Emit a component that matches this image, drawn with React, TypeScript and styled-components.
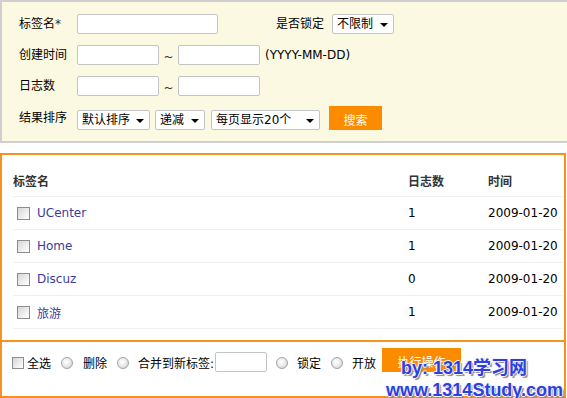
import React from "react";
import styled, { createGlobalStyle } from "styled-components";

const GlobalStyle = createGlobalStyle`
  html, body { margin: 0; padding: 0; background: #fff; }
  body {
    font-family: "DejaVu Sans", "Noto Sans CJK SC", sans-serif;
    font-size: 12px;
    color: #000;
    overflow: hidden;
  }
  * { box-sizing: border-box; }
`;

const Page = styled.div`
  position: relative;
  width: 567px;
  height: 398px;
  overflow: hidden;
`;

/* ---------- search panel ---------- */
const SearchPanel = styled.div`
  background: #fcf9e3;
  border: 2px solid #cfcfcf;
  border-right: none;
  height: 143px;
  padding: 12px 0 0 17px;
  display: flex;
  flex-direction: column;
  gap: 11px;
`;

const FormRow = styled.div<{ $tall?: boolean }>`
  display: flex;
  align-items: ${(p) => (p.$tall ? "flex-end" : "center")};
  height: ${(p) => (p.$tall ? 24 : 20)}px;
  margin-top: ${(p) => (p.$tall ? -1 : 0)}px;
`;

const FieldLabel = styled.span`
  width: 58px;
  flex-shrink: 0;
  line-height: 20px;
  align-self: center;
`;

const Required = styled.span`
  color: #333;
`;

const TextInput = styled.input<{ $w: number; $ml?: number }>`
  width: ${(p) => p.$w}px;
  height: 20px;
  margin: 0 0 0 ${(p) => p.$ml ?? 0}px;
  padding: 0 3px;
  border: 1px solid #c4c4c4;
  border-radius: 2px;
  background: #fff;
  font: inherit;
  flex-shrink: 0;
`;

const InlineText = styled.span<{ $ml?: number }>`
  margin-left: ${(p) => p.$ml ?? 0}px;
  line-height: 20px;
  white-space: nowrap;
`;

const Tilde = styled.span`
  width: 19px;
  text-align: center;
  padding-top: 5px;
  line-height: 15px;
  color: #333;
`;

const SelectBox = styled.div<{ $w: number; $ml?: number }>`
  width: ${(p) => p.$w}px;
  height: 20px;
  margin-left: ${(p) => p.$ml ?? 0}px;
  flex-shrink: 0;
  display: flex;
  align-items: center;
  justify-content: space-between;
  padding: 0 5px 0 4px;
  background: #fff;
  border: 1px solid #c4c4c4;
  border-radius: 2px;
  white-space: nowrap;
`;

const SelectValue = styled.span`
  line-height: 18px;
`;

const SelectArrow = styled.span`
  width: 0;
  height: 0;
  border-left: 4px solid transparent;
  border-right: 4px solid transparent;
  border-top: 4px solid #000;
  margin-top: 1px;
`;

const OrangeButton = styled.button<{ $w: number; $ml: number }>`
  width: ${(p) => p.$w}px;
  height: 24px;
  margin-left: ${(p) => p.$ml}px;
  flex-shrink: 0;
  background: #fd8b00;
  border: none;
  color: #fff;
  font: inherit;
  padding: 3px 0 0;
  cursor: pointer;
`;

/* ---------- list ---------- */
const ListBox = styled.div`
  margin-top: 10px;
  width: 566px;
  height: 245px;
  border: 2px solid #f6921e;
`;

const TableArea = styled.div`
  padding: 9px 1px 11px 11px;
`;

const TableRow = styled.div<{ $head?: boolean }>`
  display: grid;
  grid-template-columns: 395px 80px 1fr;
  align-items: center;
  height: 33px;
  border-bottom: 1px solid #efefef;
  font-weight: ${(p) => (p.$head ? "bold" : "normal")};
  color: ${(p) => (p.$head ? "#333" : "#000")};
  white-space: nowrap;
`;

const NameCell = styled.div`
  display: flex;
  align-items: center;
`;

const CheckBox = styled.span<{ $size: number; $ml?: number; $mb?: number }>`
  display: inline-block;
  flex-shrink: 0;
  width: ${(p) => p.$size}px;
  height: ${(p) => p.$size}px;
  margin-left: ${(p) => p.$ml ?? 0}px;
  margin-bottom: ${(p) => p.$mb ?? 0}px;
  border: 1px solid #8d8d8d;
  background: linear-gradient(135deg, #d6d6d6 0%, #f4f4f4 70%, #ffffff 100%);
`;

const TagLink = styled.a`
  margin-left: 7px;
  color: #3c3c9c;
  text-decoration: none;
`;

/* ---------- footer ---------- */
const Footer = styled.div`
  border-top: 2px solid #f6921e;
  padding: 6px 0 24px 10px;
`;

const FooterRow = styled.div`
  display: flex;
  align-items: flex-end;
  height: 24px;
`;

const FooterText = styled.span<{ $ml: number }>`
  margin-left: ${(p) => p.$ml}px;
  line-height: 16px;
  white-space: nowrap;
`;

const Radio = styled.span<{ $ml: number }>`
  display: inline-block;
  flex-shrink: 0;
  width: 12px;
  height: 12px;
  margin-left: ${(p) => p.$ml}px;
  margin-bottom: 3px;
  border-radius: 50%;
  border: 1px solid #a2a2a2;
  background: radial-gradient(circle at 40% 40%, #ffffff 0%, #ececec 45%, #c8c8c8 100%);
`;

/* ---------- watermark ---------- */
const Watermark = styled.div`
  position: absolute;
  left: 386px;
  top: 357px;
  font-family: "Liberation Sans", "Noto Sans CJK SC", sans-serif;
  font-weight: bold;
  font-size: 18px;
  line-height: 22px;
  color: #2d3fe0;
  white-space: nowrap;
  pointer-events: none;
  text-shadow: 1px 0 0 #f4f4ff, -1px 0 0 #f4f4ff, 0 1px 0 #f4f4ff, 0 -1px 0 #f4f4ff,
    2px 2px 1px #8a8a8a;
`;

const WatermarkLine = styled.div<{ $indent: number }>`
  padding-left: ${(p) => p.$indent}px;
`;

const tags = [
  { name: "UCenter", count: 1, date: "2009-01-20" },
  { name: "Home", count: 1, date: "2009-01-20" },
  { name: "Discuz", count: 0, date: "2009-01-20" },
  { name: "旅游", count: 1, date: "2009-01-20" },
];

const Select = ({ w, ml, value }: { w: number; ml?: number; value: string }) => (
  <SelectBox $w={w} $ml={ml}>
    <SelectValue>{value}</SelectValue>
    <SelectArrow />
  </SelectBox>
);

export default function App() {
  return (
    <Page>
      <GlobalStyle />
      <SearchPanel>
        <FormRow>
          <FieldLabel>
            标签名<Required>*</Required>
          </FieldLabel>
          <TextInput $w={141} />
          <InlineText $ml={58}>是否锁定</InlineText>
          <Select w={62} ml={8} value="不限制" />
        </FormRow>
        <FormRow>
          <FieldLabel>创建时间</FieldLabel>
          <TextInput $w={82} />
          <Tilde>~</Tilde>
          <TextInput $w={82} />
          <InlineText $ml={5}>(YYYY-MM-DD)</InlineText>
        </FormRow>
        <FormRow>
          <FieldLabel>日志数</FieldLabel>
          <TextInput $w={82} />
          <Tilde>~</Tilde>
          <TextInput $w={82} />
        </FormRow>
        <FormRow $tall>
          <FieldLabel>结果排序</FieldLabel>
          <Select w={73} value="默认排序" />
          <Select w={50} ml={5} value="递减" />
          <Select w={109} ml={6} value="每页显示20个" />
          <OrangeButton $w={53} $ml={9}>搜索</OrangeButton>
        </FormRow>
      </SearchPanel>

      <ListBox>
        <TableArea>
          <TableRow $head>
            <div>标签名</div>
            <div>日志数</div>
            <div>时间</div>
          </TableRow>
          {tags.map((t) => (
            <TableRow key={t.name}>
              <NameCell>
                <CheckBox $size={13} $ml={4} />
                <TagLink href="#">{t.name}</TagLink>
              </NameCell>
              <div>{t.count}</div>
              <div>{t.date}</div>
            </TableRow>
          ))}
        </TableArea>
        <Footer>
          <FooterRow>
            <CheckBox $size={12} $mb={3} />
            <FooterText $ml={3}>全选</FooterText>
            <Radio $ml={10} />
            <FooterText $ml={10}>删除</FooterText>
            <Radio $ml={10} />
            <FooterText $ml={9}>合并到新标签:</FooterText>
            <TextInput $w={52} $ml={1} />
            <Radio $ml={9} />
            <FooterText $ml={9}>锁定</FooterText>
            <Radio $ml={10} />
            <FooterText $ml={9}>开放</FooterText>
            <OrangeButton $w={79} $ml={6}>执行操作</OrangeButton>
          </FooterRow>
        </Footer>
      </ListBox>

      <Watermark>
        <WatermarkLine $indent={15}>by: 1314学习网</WatermarkLine>
        <WatermarkLine $indent={0}>www.1314Study.com</WatermarkLine>
      </Watermark>
    </Page>
  );
}
